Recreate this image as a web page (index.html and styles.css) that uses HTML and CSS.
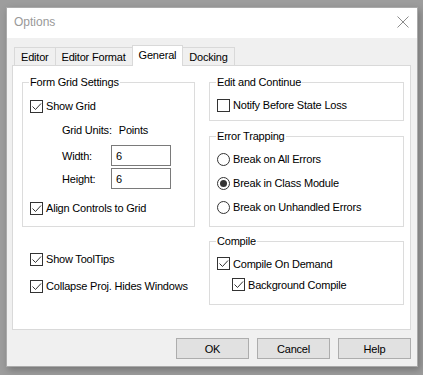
FILE: index.html
```html
<!DOCTYPE html>
<html>
<head>
    <meta charset="utf-8">
    <title>Options</title>
    <link rel="stylesheet" href="styles.css">
</head>
<body>

<div class="dialog">
    <div class="titlebar">
        <span class="title">Options</span>
        <svg class="close" width="12" height="12" viewBox="0 0 12 12">
            <path d="M0.5 0.5 L11.5 11.5 M11.5 0.5 L0.5 11.5" stroke="#8c8c8c" stroke-width="1" fill="none"/>
        </svg>
    </div>

    <div class="content">
        <div class="tabs">
            <div class="tab">Editor</div>
            <div class="tab">Editor Format</div>
            <div class="tab active">General</div>
            <div class="tab">Docking</div>
        </div>

        <div class="panel">
            <div class="col col-left">
                <fieldset class="group group-grid">
                    <legend>Form Grid Settings</legend>
                    <div class="row">
                        <span class="check on"><svg width="11" height="11" viewBox="0 0 11 11"><polyline points="1.5,5.5 4.5,8.5 10,2.5" fill="none" stroke="#333" stroke-width="1"/></svg></span>
                        Show Grid
                    </div>
                    <div class="row indent">Grid Units:<span class="units">Points</span></div>
                    <div class="row indent field first">
                        <span class="field-label">Width:</span>
                        <span class="input">6</span>
                    </div>
                    <div class="row indent field">
                        <span class="field-label">Height:</span>
                        <span class="input">6</span>
                    </div>
                    <div class="row align-row">
                        <span class="check on"><svg width="11" height="11" viewBox="0 0 11 11"><polyline points="1.5,5.5 4.5,8.5 10,2.5" fill="none" stroke="#333" stroke-width="1"/></svg></span>
                        Align Controls to Grid
                    </div>
                </fieldset>

                <div class="loose">
                    <div class="row">
                        <span class="check on"><svg width="11" height="11" viewBox="0 0 11 11"><polyline points="1.5,5.5 4.5,8.5 10,2.5" fill="none" stroke="#333" stroke-width="1"/></svg></span>
                        Show ToolTips
                    </div>
                    <div class="row">
                        <span class="check on"><svg width="11" height="11" viewBox="0 0 11 11"><polyline points="1.5,5.5 4.5,8.5 10,2.5" fill="none" stroke="#333" stroke-width="1"/></svg></span>
                        Collapse Proj. Hides Windows
                    </div>
                </div>
            </div>

            <div class="col col-right">
                <fieldset class="group group-edit">
                    <legend>Edit and Continue</legend>
                    <div class="row">
                        <span class="check"></span>
                        Notify Before State Loss
                    </div>
                </fieldset>

                <fieldset class="group group-errors">
                    <legend>Error Trapping</legend>
                    <div class="row"><span class="radio"></span>Break on All Errors</div>
                    <div class="row"><span class="radio on"></span>Break in Class Module</div>
                    <div class="row"><span class="radio"></span>Break on Unhandled Errors</div>
                </fieldset>

                <fieldset class="group group-compile">
                    <legend>Compile</legend>
                    <div class="row short">
                        <span class="check on"><svg width="11" height="11" viewBox="0 0 11 11"><polyline points="1.5,5.5 4.5,8.5 10,2.5" fill="none" stroke="#333" stroke-width="1"/></svg></span>
                        Compile On Demand
                    </div>
                    <div class="row short sub">
                        <span class="check on"><svg width="11" height="11" viewBox="0 0 11 11"><polyline points="1.5,5.5 4.5,8.5 10,2.5" fill="none" stroke="#333" stroke-width="1"/></svg></span>
                        Background Compile
                    </div>
                </fieldset>
            </div>
        </div>

        <div class="buttons">
            <div class="button">OK</div>
            <div class="button">Cancel</div>
            <div class="button">Help</div>
        </div>
    </div>
</div>

</body>
</html>
```

FILE: styles.css
```css
html, body {
    margin: 0px;
    padding: 0px;
}

body {
    width: 423px;
    height: 375px;
    overflow: hidden;
    background-color: #9d9d9d;
    font-family: "Liberation Sans", Arial, sans-serif;
    font-size: 11px;
    letter-spacing: -0.2px;
    color: #000000;
}

.dialog {
    box-sizing: border-box;
    width: 412px;
    height: 360px;
    margin: 7px 0px 0px 6px;
    border: 1px solid #aaaaaa;
    background-color: #f0f0f0;
    display: flex;
    flex-direction: column;
    box-shadow: 2px 3px 7px rgba(0, 0, 0, 0.25);
}

.titlebar {
    height: 30px;
    padding: 0px 8px 2px 7px;
    box-sizing: border-box;
    background-color: #ffffff;
    display: flex;
    align-items: center;
    justify-content: space-between;
}

.title {
    font-size: 12px;
    letter-spacing: 0px;
    color: #999999;
}

.content {
    flex: 1;
    padding: 7px 6px 0px 5px;
    display: flex;
    flex-direction: column;
}

/* tab strip */
.tabs {
    height: 20px;
    margin-left: 2px;
    display: flex;
    align-items: flex-end;
}

.tab {
    box-sizing: border-box;
    height: 18px;
    padding: 0px 6px;
    border: 1px solid #d9d9d9;
    border-bottom: none;
    margin-right: -1px;
    display: flex;
    align-items: center;
    background-color: #f0f0f0;
}

.tab.active {
    position: relative;
    z-index: 1;
    height: 21px;
    margin-bottom: -1px;
    padding: 0px 6px 2px 6px;
    background-color: #ffffff;
}

.panel {
    box-sizing: border-box;
    height: 265px;
    padding: 9px 6px 0px 9px;
    border: 1px solid #d9d9d9;
    background-color: #ffffff;
    display: flex;
    gap: 14px;
}

.col-left {
    width: 173px;
}

.col-right {
    width: 195px;
}

/* group boxes */
.group {
    margin: 0px;
    padding: 0px 7px;
    border: 1px solid #dcdcdc;
    min-width: 0;
}

.group legend {
    margin-left: -1px;
    padding: 0px 1px;
    line-height: 14px;
}

.group-grid {
    padding-top: 5px;
    padding-bottom: 6px;
}

.group-edit {
    padding-top: 4px;
    padding-bottom: 3px;
}

.group-errors {
    margin-top: 8px;
    padding-top: 4px;
    padding-bottom: 7px;
}

.group-compile {
    margin-top: 7px;
    padding-top: 5px;
    padding-bottom: 9px;
}

.row {
    height: 24px;
    display: flex;
    align-items: center;
    white-space: nowrap;
}

.row.short {
    height: 21px;
}

.row.sub {
    padding-left: 15px;
}

.indent {
    padding-left: 32px;
}

.units {
    margin-left: 7px;
}

.field {
    height: 23px;
}

.field.first {
    margin-top: 2px;
}

.field-label {
    width: 49px;
}

.input {
    box-sizing: border-box;
    width: 60px;
    height: 21px;
    padding-left: 4px;
    border: 1px solid #7a7a7a;
    background-color: #ffffff;
    display: flex;
    align-items: center;
}

.align-row {
    margin-top: 6px;
}

.loose {
    padding-left: 8px;
    margin-top: 20px;
}

.loose .row + .row {
    margin-top: 3px;
}

/* check boxes and radio buttons */
.check {
    box-sizing: border-box;
    width: 13px;
    height: 13px;
    margin-right: 3px;
    border: 1px solid #333333;
    background-color: #ffffff;
    flex-shrink: 0;
}

.check svg {
    display: block;
}

.radio {
    box-sizing: border-box;
    width: 13px;
    height: 13px;
    margin-right: 3px;
    border: 1px solid #333333;
    border-radius: 50%;
    background-color: #ffffff;
    flex-shrink: 0;
    display: flex;
    align-items: center;
    justify-content: center;
}

.radio.on::after {
    content: "";
    width: 7px;
    height: 7px;
    border-radius: 50%;
    background-color: #333333;
}

/* bottom buttons */
.buttons {
    margin-top: 8px;
    display: flex;
    justify-content: flex-end;
    gap: 8px;
}

.button {
    box-sizing: border-box;
    width: 73px;
    height: 21px;
    border: 1px solid #adadad;
    background-color: #e1e1e1;
    display: flex;
    align-items: center;
    justify-content: center;
}
```
